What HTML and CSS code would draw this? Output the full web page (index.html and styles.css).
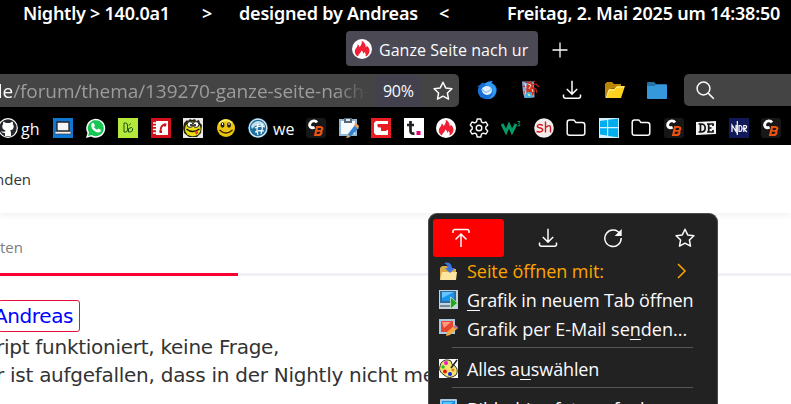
FILE: index.html
```html
<!DOCTYPE html>
<html lang="de">
<head>
    <meta charset="UTF-8">
    <title>Ganze Seite nach unten</title>
    <link rel="stylesheet" href="styles.css">
</head>
<body>
    <!-- shared icons -->
    <svg class="defs">
        <symbol id="star" viewBox="0 0 20 20"><path d="M10 1.200l2.700 5.700 6.200.8-4.500 4.300 1.100 6.200-5.500-3-5.500 3L5.600 12 1.100 7.700l6.200-.8z" fill="none" stroke="#fbfbfe" stroke-width="1.500" stroke-linejoin="round"/></symbol>
        <symbol id="download" viewBox="0 0 20 20"><path d="M10 .8v13M4.800 9L10 14.100 15.200 9M1.500 14.500v1.800q0 2 2 2h13q2 0 2-2v-1.800" fill="none" stroke="#fbfbfe" stroke-width="1.500"/></symbol>
        <symbol id="flame" viewBox="0 0 20 20"><circle cx="10" cy="10" r="10" fill="#fff"/><path d="M6 17.500C3 16 2.200 13 3.200 10.500 4 8.800 5.800 7.800 5.600 5.400 7 6 7.500 7 7.400 8.200 9.500 6 10.200 4 9.700 1.700c3 1.500 4.300 4 4 6.500.8-.4 1-1 1.100-1.800C17 8.500 18.300 11 17.200 13.800 16.500 15.700 15 17 13.400 17.500c.8-2 .1-3.500-1.100-4.700.1 1-.2 1.500-.9 2-.3-1.600-.9-2.600-2.200-3.300.3 2.300-2.600 3-3.200 6z" fill="#f02036"/></symbol>
        <symbol id="cb" viewBox="0 0 20 20"><rect width="20" height="20" rx="3" fill="#171717"/><path d="M11 4.600C9.500 2.200 5.500 2.400 4 5.400c-1.300 3.200 1.200 5.300 4.600 3.900" fill="none" stroke="#fff" stroke-width="2.800"/><path d="M11 9h3.400q2.700.2 1.600 2.700-.6 1.100-2 1.100 2 .2 1.300 2.300-.6 1.900-2.900 1.900H9.200z" fill="none" stroke="#ec5310" stroke-width="2.200"/><path d="M10.300 12.900h3.800" stroke="#ec5310" stroke-width="1.700"/></symbol>
        <symbol id="folder" viewBox="0 0 20 20"><path d="M1.200 15V4.500q0-2.400 2.400-2.400h3.600q1 0 1.500.8l1.200 1.700h6.500q2.400 0 2.400 2.400V15q0 2.300-2.400 2.300H3.600Q1.200 17.300 1.200 15z" fill="none" stroke="#fbfbfe" stroke-width="1.500"/></symbol>
    </svg>

    <div class="titlebar">
        <span class="version">Nightly &gt; 140.0a1</span>
        <span class="arrow">&gt;</span>
        <span class="author">designed by Andreas</span>
        <span class="arrow2">&lt;</span>
        <span class="clock">Freitag, 2. Mai 2025 um 14:38:50</span>
    </div>

    <div class="tabs">
        <div class="tab">
            <svg class="icon"><use href="#flame"/></svg>
            <span class="label">Ganze Seite nach ur</span>
        </div>
        <svg class="newtab" viewBox="0 0 16 16"><path d="M8 .5v15M.5 8h15" stroke="#fbfbfe" stroke-width="1.300"/></svg>
    </div>

    <div class="navbar">
        <div class="urlbar">
            <div class="url"><b>de</b>/forum/thema/139270-ganze-seite-nach-</div>
            <span class="zoom">90%</span>
            <svg class="icon urlstar"><use href="#star"/></svg>
        </div>
        <div class="tools">
            <svg class="icon" viewBox="0 0 20 20"><path d="M0 6.500L3 5q1-2 3-2.500l2 1Q11 0 16 1.200L14.500 3Q20 5 19.800 10.500 19 19 10 19.300 1 18.500.8 11q0-2.500 1-4z" fill="#176fd6"/><path d="M8 3.500q3-2.500 7-2L14 3q6 3 5 9-2 6-8 7 6-4 4.500-9Q14 5 8 5.500z" fill="#2f9bf0"/><path d="M4.500 9.500Q6 6 10 6t5 4q0 4.500-5 5-4.500-.5-5.500-5.500z" fill="#e4f1fc"/><path d="M5 9q2 3.500 5 3t4.500-3.500" fill="none" stroke="#7fbdf2" stroke-width="1.200"/></svg>
            <svg class="icon" viewBox="0 0 20 20"><path d="M2 1.500h12l.5 16-10 .5-1.500-5z" fill="#8ba4d3"/><path d="M7 5l2-4 3 1 1 4 2 5-2 4-4 1-3-5z" fill="#cf3420"/><path d="M12 5l4-1 3 3M13 8l3 1 1 4M9 3L5 2M7 7L3 6M7 10l-3 3M13 2l2-1" stroke="#b8261b" fill="none" stroke-width="1.200"/><path d="M8 4l3 1-2 4M5 3l1 5M6 10l-1 4M12 9l1 3" stroke="#ffd9be" fill="none"/><path d="M6 13q3-2 6 0v4.500H6z" fill="#39afe2"/><path d="M8 14l2 2" stroke="#e7ee8d" stroke-width="1.500"/></svg>
            <svg class="icon"><use href="#download"/></svg>
            <svg class="icon" viewBox="0 0 20 20"><path d="M0 18V4l2-2h5l2 2h7v4L5 9z" fill="#b98608"/><path d="M1 18L4 9h5l3-3h8l-4 12z" fill="#ffd21f"/><path d="M1 18L4 10h5l3-3h7" fill="none" stroke="#fff0a0"/></svg>
            <svg class="icon" viewBox="0 0 20 20"><path d="M0 18V3q0-1 1-1h6l2 2h10q1 0 1 1v13z" fill="#2372a8"/><path d="M0 6h7l2-1h11v13q0 1-1 1H1q-1 0-1-1z" fill="#3498db"/></svg>
        </div>
        <div class="search">
            <svg class="icon" viewBox="0 0 20 20"><circle cx="7.500" cy="7.500" r="6.400" fill="none" stroke="#fbfbfe" stroke-width="1.500"/><path d="M12.100 12.100l5.700 5.700" stroke="#fbfbfe" stroke-width="1.600"/></svg>
        </div>
    </div>

    <div class="bookmarks">
        <div class="bookmark gh">
            <svg class="icon" viewBox="0 0 20 20"><circle cx="10" cy="10" r="9.300" fill="#25292e" stroke="#fff" stroke-width="1.200"/><path d="M7 18v-3q-3 .5-4-2 2 1 4 .5l.5-1Q4 11.500 4.300 8q.1-1 .8-1.800-.3-1.400.2-2.500Q7 4 8 5h4q1.500-1.200 2.700-1.300.5 1.300.2 2.500.8 1 .8 2.300 0 3.500-3.700 4 1 .9 1 2.500v3z" fill="#fff"/></svg>
            <span>gh</span>
        </div>
        <svg class="icon" viewBox="0 0 20 20"><path d="M0 0h20v20H0z" fill="#0f78d4"/><path d="M4 4h12v9H4z" fill="#f6f6f6" stroke="#222" stroke-width="1.300"/><path d="M2 13.500h16V16H2z" fill="#eee" stroke="#333" stroke-width=".6"/></svg>
        <svg class="icon" viewBox="0 0 20 20"><path d="M0 20l1.500-5A9.500 9.500 0 1 1 5 18.500z" fill="#fff"/><path d="M2 18l1-3.500A8 8 0 1 1 5.500 17z" fill="#16c653"/><path d="M6 5l1.500-.2L9 7.500 8 9q1.200 2 3.200 2.800L12.500 10.500 15 12q0 2-2 2.500Q10 15 7 11.800 4 8 6 5z" fill="#fff"/></svg>
        <svg class="icon" viewBox="0 0 20 20"><path d="M0 0h20v20H0z" fill="#b5ea3c"/><path d="M6 5v9h1.500q2 0 2-2V7q0-2-2-2zM11 7.500L12.500 5.500M10.500 14v-3.500l3-1q1.500.4 1 2.500-.4 2-2.500 2z" fill="none" stroke="#24551c"/></svg>
        <svg class="icon" viewBox="0 0 20 20"><path d="M0 0h20v20H0z" fill="#d0101b"/><path d="M5 3h12v14H5z" fill="#fff"/><path d="M2 5h4M2 8.300h4M2 11.600h4M2 15h4" stroke="#fff" stroke-width="1.500"/><path d="M14 6.500Q9.500 7 9.500 13.500" fill="none" stroke="#d0101b" stroke-width="1.800"/><path d="M13 5.500h2.500L15 8.500h-2zM8.500 12.500H11v2.500H8.500z" fill="#d0101b"/></svg>
        <svg class="icon" viewBox="0 0 20 20"><path d="M0 0h20v20H0z" fill="#e9e9e9"/><path d="M1 5l3-3 1 1 2-2 2 1 3-1 1 2 3-1 1 3 2 2-1 8-4 4H6l-5-4-1-5z" fill="#292708"/><ellipse cx="9.800" cy="11" rx="7.800" ry="7.300" fill="#ebdd12"/><circle cx="7" cy="6.500" r="2.900" fill="#fff" stroke="#222"/><circle cx="13" cy="6.500" r="2.900" fill="#fff" stroke="#222"/><circle cx="8" cy="7" r="1"/><circle cx="12" cy="7" r="1"/><path d="M3.500 11q6 5 13 0" fill="none" stroke="#111" stroke-width="1.500"/><path d="M11.500 13.500l3-1 .5 3-2 1z" fill="#e43b2f"/></svg>
        <svg class="icon" viewBox="0 0 20 20"><circle cx="10" cy="10" r="9" fill="#edc511"/><path d="M3 6q6-7 13-1" stroke="#fff060" stroke-width="2" fill="none"/><ellipse cx="6.500" cy="7" rx="2" ry="2.700" fill="#222"/><ellipse cx="13" cy="7" rx="2" ry="2.700" fill="#222"/><path d="M6.500 5v2M13 5v2" stroke="#fff"/><path d="M3.500 12q6.500 6 13 0" fill="none" stroke="#302500" stroke-width="1.300"/></svg>
        <div class="bookmark we">
            <svg class="icon" viewBox="0 0 20 20"><circle cx="10" cy="10" r="9.900" fill="#2b7ca9"/><circle cx="10" cy="10" r="8.800" fill="#1c6f9f" stroke="#dceaf1" stroke-width="1.200"/><path d="M3 8q2-5 8-5 5 1 6 5l-4-1-6 1-3 3z" fill="#c5dfea"/><path d="M7 10q5-3 10-1M7 14q5-2 9-1M10 6q-2 6 0 11M14 6q1 5-1 10" fill="none" stroke="#fff" stroke-width="1.200"/></svg>
            <span>we</span>
        </div>
        <svg class="icon"><use href="#cb"/></svg>
        <svg class="icon" viewBox="0 0 20 20"><path d="M0 1h18v17H0z" fill="#91b8d5"/><path d="M2 3h14v13H2z" fill="#f5faff"/><path d="M5 0h8v5H5z" fill="#586879"/><path d="M7 1h4v2H7z" fill="#dce7f0"/><path d="M16 7l4 3-9 9-3 1 1-4z" fill="#3185d1"/><path d="M9 16l2 3-4 1zM15 7l2-2 3 3-1 3z" fill="#e9a154"/></svg>
        <svg class="icon" viewBox="0 0 20 20"><path d="M0 0h20v20H0z" fill="#e91c24"/><path d="M5 3h12v14H5l-2-2V5z" fill="#fff"/><path d="M6.500 6H17v6h-1.500v1H10V9.500H7.500l-1-1z" fill="#e91c24"/><path d="M17 6.500h3v6h-3z" fill="#e91c24"/></svg>
        <svg class="icon" viewBox="0 0 20 20"><path d="M0 0h20v20H0z" fill="#fff"/><path d="M6.500 3v10q0 3 4 2.500M3 7h7" fill="none" stroke="#1e1e24" stroke-width="2.700"/><path d="M12.500 13h4v4h-4z" fill="#e5007d"/></svg>
        <svg class="icon"><use href="#flame"/></svg>
        <svg class="icon" viewBox="0 0 20 20"><path d="M8.200 1h3.600l.7 2.800 1.800 1 2.700-.8 1.800 3.100-2 1.900v2l2 1.900-1.800 3.100-2.700-.8-1.800 1-.7 2.800H8.200l-.7-2.800-1.800-1-2.700.8-1.800-3.100 2-1.900V9l-2-1.900L3 4l2.700.8 1.800-1z" fill="none" stroke="#fbfbfe" stroke-width="1.400" stroke-linejoin="round"/><circle cx="10" cy="10" r="2.800" fill="none" stroke="#fbfbfe" stroke-width="1.400"/></svg>
        <svg class="icon" viewBox="0 0 20 20"><path d="M1 6l4 8 3-7 3 7 4-8" fill="none" stroke="#049b65" stroke-width="3"/><path d="M16.500 3.500H19L17.500 5.500q2.500.5 1 2.500l-2-.2" fill="none" stroke="#049b65"/></svg>
        <svg class="icon" viewBox="0 0 20 20"><circle cx="10" cy="10" r="9.800" fill="#f1eded"/><path d="M9 7.300Q3.500 5.500 3.300 8q0 1.500 3 2 2.700.6 2.400 2.300-.7 2.500-6.200 1.200M11.500 3.500v11M11.500 9.500q5-4 5 .5v4.500" fill="none" stroke="#d31920" stroke-width="1.400"/></svg>
        <svg class="icon"><use href="#folder"/></svg>
        <svg class="icon" viewBox="0 0 20 20"><path d="M0 0h20v20H0z" fill="#d2f0fb"/><path d="M1 3l7-1v7H1zM9.200 1.800L19 .5V9H9.200zM1 10.300h7v7.200l-7-1zM9.200 10.300H19v9L9.200 18z" fill="#00adef"/></svg>
        <svg class="icon"><use href="#folder"/></svg>
        <svg class="icon"><use href="#cb"/></svg>
        <svg class="icon" viewBox="0 0 20 20"><path d="M0 4l20-1v13L0 17z" fill="#f4f4f4"/><path d="M2.500 6H5q4.200 0 4.200 4T5 14H2.500M4.500 6v8M11 6h6v2M12.700 6v8M12.700 10H15.500M11 14h6v-2" fill="none" stroke="#111" stroke-width="1.700"/></svg>
        <svg class="icon" viewBox="0 0 20 20"><path d="M0 0h20v20H0z" fill="#10195a"/><path d="M3 14V7l4 6.500V7M8.300 3v14M10 7.500v6h1q2 0 2-3t-2-3zM14.800 14V7.500h1.500q1.500.2 1.300 1.700-.2 1.500-2.800 1.500l3 3.300" fill="none" stroke="#fff" stroke-width="1.200"/></svg>
        <svg class="icon"><use href="#cb"/></svg>
    </div>

    <div class="page">
        <div class="pagehead"><span>nden</span></div>
        <div class="pagetabs"><span>ten</span><div class="active"></div></div>
        <div class="post">
            <a class="mention">Andreas</a>
            <p>ript funktioniert, keine Frage,</p>
            <p>r ist aufgefallen, dass in der Nightly nicht me</p>
        </div>
    </div>

    <div class="menu">
        <div class="menutop">
            <div class="up"><svg class="icon" viewBox="0 0 20 20"><path d="M2 5V3.500q0-2 2-2h12q2 0 2 2V5M10 19V6M4.500 11.500L10 6l5.500 5.500" fill="none" stroke="#fbfbfe" stroke-width="1.500"/></svg></div>
            <svg class="icon load"><use href="#download"/></svg>
            <svg class="icon reload" viewBox="0 0 20 20"><path d="M17 6A8.200 8.200 0 1 0 18.200 10" fill="none" stroke="#fbfbfe" stroke-width="1.500"/><path d="M18.700 1v7h-7z" fill="#fbfbfe"/></svg>
            <svg class="icon"><use href="#star"/></svg>
        </div>
        <div class="item open">
            <svg viewBox="0 0 19 19"><path d="M1 17V6l2-2h5l2 3h7v11z" fill="#dba948"/><path d="M1 18l2-8h15l-1 8z" fill="#fde5a0"/><path d="M5 1q7-2 8 5h3l-5 5-5-5h3Q9 3 5 1z" fill="#3b75df"/></svg>
            <span>Seite öffnen mit:</span>
            <svg class="chevron" viewBox="0 0 10 16"><path d="M1 1l7 7-7 7" fill="none" stroke="#ffa500" stroke-width="1.500"/></svg>
        </div>
        <div class="item">
            <svg viewBox="0 0 19 19"><path d="M0 0h19v19H0z" fill="#c4d3df"/><path d="M1 1h16v12H1z" fill="#2d6c9e"/><path d="M3 2h12v9H3z" fill="#1694ee"/><path d="M3 2h12L3 8z" fill="#66c5ff"/><path d="M1 15h11v2H1z" fill="#748996"/><path d="M11.500 7l7 6-7 6z" fill="#23a51d" stroke="#d9efd4" stroke-width=".7"/></svg>
            <span><u>G</u>rafik in neuem Tab öffnen</span>
        </div>
        <div class="item mail">
            <svg viewBox="0 0 19 19"><path d="M0 0h16v15H0z" fill="#a9c9e5"/><path d="M2 2h12v11H2z" fill="#e8442f"/><path d="M3 3h9L5 9z" fill="#ff9b83"/><path d="M16 6l3 3-8 7-4 1 1-4z" fill="#f4aa45"/><path d="M16 6l3 2-2 2-3-2z" fill="#b2799f"/></svg>
            <span>Grafik per E-Mail se<u>n</u>den...</span>
        </div>
        <hr>
        <div class="item">
            <svg viewBox="0 0 19 19"><path d="M0 0h19v19H0z" fill="#fff"/><path d="M2 4q4-5 10-2 0 4 4 5 4 4 1 9-7 5-12 0Q-1 12 1 7z" fill="#f2e46d" stroke="#333"/><circle cx="7" cy="4" r="2" fill="#ed16c7"/><circle cx="4" cy="8" r="1.700" fill="#17c233"/><circle cx="6" cy="12.500" r="2" fill="#e21a1a"/><circle cx="11" cy="15" r="2" fill="#1228e2"/><circle cx="14" cy="11" r="1.500" fill="#f07b18"/><path d="M18 1l-6 8" stroke="#222" stroke-width="1.500"/></svg>
            <span>Alles a<u>u</u>swählen</span>
        </div>
        <hr>
        <div class="item">
            <svg viewBox="0 0 19 19"><path d="M1 1q0-1 1-1h15q1 0 1 1v13H1z" fill="#aac6dd"/><path d="M3 2h13v10H3z" fill="#148eee"/><path d="M4 3h11L4 9z" fill="#5fc3ff"/></svg>
            <span>Bildschirmfoto aufnehmen</span>
        </div>
    </div>
</body>
</html>
```
FILE: styles.css
```css
* {
    box-sizing: border-box;
}
body {
    margin: 0;
    height: 404px;
    overflow: hidden;
    position: relative;
    background-color: #fff;
    font-family: "Open Sans", "Noto Sans", sans-serif;
    font-size: 16px;
    color: #fbfbfe;
}
svg {
    display: block;
    flex: none;
}
.defs {
    display: none;
}
.icon {
    width: 20px;
    height: 20px;
}
.titlebar {
    height: 31px;
    padding: 2px 0 0 23px;
    display: flex;
    background-color: #000;
    color: #fff;
    font-family: "Noto Sans", sans-serif;
    font-size: 18px;
    font-weight: 600;
    line-height: 22px;
    letter-spacing: -0.2px;
    white-space: nowrap;
}
.version {
    width: 179px;
    letter-spacing: -0.25px;
}
.arrow {
    width: 37px;
}
.author {
    width: 200px;
}
.arrow2 {
    width: 68px;
}
.tabs {
    height: 43px;
    padding-left: 346px;
    display: flex;
    background-color: #000;
}
.tab {
    width: 192px;
    height: 35px;
    padding-left: 6px;
    display: flex;
    align-items: center;
    gap: 7px;
    border-radius: 4px;
    background-color: #4a4954;
    white-space: nowrap;
}
.label {
    padding-top: 2px;
    letter-spacing: 0.05px;
}
.newtab {
    width: 16px;
    height: 16px;
    margin: 11px 0 0 14px;
}
.navbar {
    height: 44px;
    display: flex;
    background-color: #000;
}
.urlbar {
    width: 459px;
    height: 33px;
    display: flex;
    align-items: center;
    border-radius: 0 5px 5px 0;
    background-color: #444;
}
.url {
    width: 375px;
    text-indent: -9px;
    overflow: hidden;
    white-space: nowrap;
    color: #9c9c9c;
    font-size: 19px;
    letter-spacing: -0.08px;
    mask-image: linear-gradient(to right, #000 335px, transparent 369px);
}
.url b {
    font-weight: 400;
    color: #fbfbfe;
}
.zoom {
    width: 47px;
    height: 31px;
    padding-left: 8px;
    line-height: 32px;
    font-size: 16px;
    letter-spacing: -0.3px;
    background-color: #42414d;
}
.urlstar {
    margin-left: 11px;
}
.tools {
    width: 225px;
    padding: 6px 0 0 18px;
    display: flex;
    gap: 22.5px;
}
.search {
    flex: 1;
    height: 32px;
    padding: 7px 0 0 12px;
    border-radius: 5px 0 0 5px;
    background-color: #444;
}
.bookmarks {
    height: 27px;
    display: flex;
    gap: 12.5px;
    background-color: #000;
}
.bookmark {
    display: flex;
    line-height: 22px;
}
.gh {
    width: 42.5px;
    margin-left: -2px;
    gap: 3px;
}
.we {
    width: 45.5px;
    gap: 5px;
}
.page {
    height: 259px;
    color: #333;
}
.pagehead {
    height: 68px;
    padding-top: 23px;
    line-height: 22px;
    font-size: 15px;
    box-shadow: 0 1px 8px rgba(0, 0, 0, 0.08);
}
.pagehead span {
    margin-left: -5px;
}
.pagetabs {
    height: 63px;
    padding-top: 23px;
    border-bottom: 3px solid #f0f0f6;
    line-height: 22px;
    font-size: 15px;
    color: #7c7c82;
}
.active {
    width: 238px;
    height: 3px;
    margin-top: 15px;
    background-color: #fa0032;
}
.post {
    padding-top: 24px;
    font-family: "DejaVu Sans", sans-serif;
    font-size: 20px;
    letter-spacing: -0.27px;
}
.mention {
    display: block;
    width: 82px;
    height: 32px;
    margin: 0 0 1px -2px;
    border: 1px solid #e8103c;
    border-radius: 3px;
    line-height: 30px;
    text-indent: -5px;
    letter-spacing: -0.4px;
    color: #00f;
}
.post p {
    margin: 0 0 0 -4px;
    line-height: 28px;
    white-space: nowrap;
}
.menu {
    position: absolute;
    left: 428px;
    top: 213px;
    width: 290px;
    height: 191px;
    padding: 5px 0 0 4px;
    overflow: hidden;
    border: 1px solid #4b4b4b;
    border-bottom: 0;
    border-radius: 9px 9px 0 0;
    background-color: #222;
    color: #fbfbfe;
}
.menutop {
    display: flex;
    align-items: center;
}
.up {
    flex: none;
    width: 71px;
    height: 38px;
    margin-right: 34px;
    padding: 9px 0 0 18px;
    border-radius: 3px;
    background-color: #f00;
}
.load {
    margin-right: 45px;
}
.reload {
    margin-right: 52px;
}
.item {
    height: 29px;
    padding-left: 6px;
    display: flex;
    align-items: center;
    gap: 9px;
    font-size: 18px;
    letter-spacing: -0.13px;
    white-space: nowrap;
}
.item svg {
    width: 19px;
    height: 19px;
}
.item u {
    text-decoration-thickness: 1px;
    text-underline-offset: 3px;
}
.open {
    height: 28px;
    color: #ffa500;
    letter-spacing: -0.05px;
}
.mail {
    letter-spacing: 0;
}
.item .chevron {
    width: 10px;
    height: 16px;
    margin-left: auto;
    margin-right: 30px;
}
.menu hr {
    width: 241px;
    height: 1px;
    margin: 4px 0 6px 19px;
    border: 0;
    background-color: #555;
}
```
